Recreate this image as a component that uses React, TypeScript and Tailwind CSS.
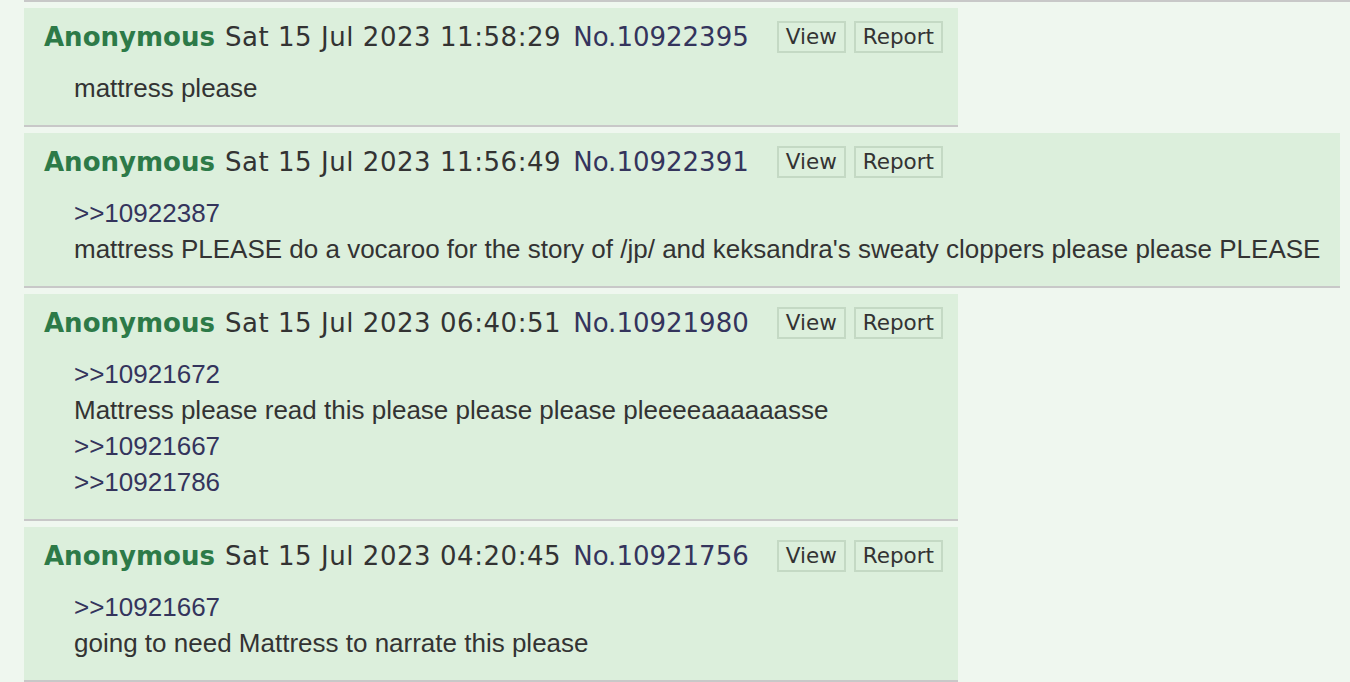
import React from 'react';

interface Post {
  id: string;
  date: string;
  lines: { quote?: boolean; text: string }[];
}

const posts: Post[] = [
  {
    id: '10922395',
    date: 'Sat 15 Jul 2023 11:58:29',
    lines: [{ text: 'mattress please' }],
  },
  {
    id: '10922391',
    date: 'Sat 15 Jul 2023 11:56:49',
    lines: [
      { quote: true, text: '>>10922387' },
      {
        text: "mattress PLEASE do a vocaroo for the story of /jp/ and keksandra's sweaty cloppers please please PLEASE",
      },
    ],
  },
  {
    id: '10921980',
    date: 'Sat 15 Jul 2023 06:40:51',
    lines: [
      { quote: true, text: '>>10921672' },
      { text: 'Mattress please read this please please please pleeeeaaaaaasse' },
      { quote: true, text: '>>10921667' },
      { quote: true, text: '>>10921786' },
    ],
  },
  {
    id: '10921756',
    date: 'Sat 15 Jul 2023 04:20:45',
    lines: [
      { quote: true, text: '>>10921667' },
      { text: 'going to need Mattress to narrate this please' },
    ],
  },
];

const verdana = { fontFamily: '"DejaVu Sans", Verdana, sans-serif' };
const arial = { fontFamily: '"Liberation Sans", Arial, sans-serif' };

const PostCard: React.FC<{ post: Post }> = ({ post }) => (
  <div className="bg-[#dcefdc] border-b-2 border-[#c8c8c8] pl-[20px] pr-[15px] pt-[9px] pb-[19px] w-fit">
    {/* Header */}
    <div className="flex items-center h-[40px] whitespace-nowrap text-[26px]" style={verdana}>
      <span className="font-bold text-[#2d7a48]">Anonymous</span>
      <span className="ml-[10px] tracking-[0.55px] text-[#333]">{post.date}</span>
      <a className="ml-[12px] text-[#34345c]">No.{post.id}</a>
      <div className="flex gap-[8px] ml-[28px]">
        <span className="border-2 border-[#c4d9c4] px-[7px] h-[32px] flex items-center text-[21.5px] text-[#333]">
          View
        </span>
        <span className="border-2 border-[#c4d9c4] px-[7px] h-[32px] flex items-center text-[21.5px] text-[#333]">
          Report
        </span>
      </div>
    </div>

    {/* Body */}
    <div className="mt-[13px] ml-[30px] pr-[5px] text-[26px] leading-[36px] whitespace-nowrap" style={arial}>
      {post.lines.map((line, i) => (
        <div key={i} className={line.quote ? 'text-[#34345c]' : 'text-[#333]'}>
          {line.text}
        </div>
      ))}
    </div>
  </div>
);

const App: React.FC = () => {
  return (
    <div className="min-h-screen bg-[#eff7ef] overflow-hidden">
      <div className="pl-[24px] flex flex-col items-start gap-[6px]">
        <div className="h-[2px] w-full bg-[#c8c8c8]"></div>
        {posts.map(post => (
          <PostCard key={post.id} post={post} />
        ))}
      </div>
    </div>
  );
};

export default App;
